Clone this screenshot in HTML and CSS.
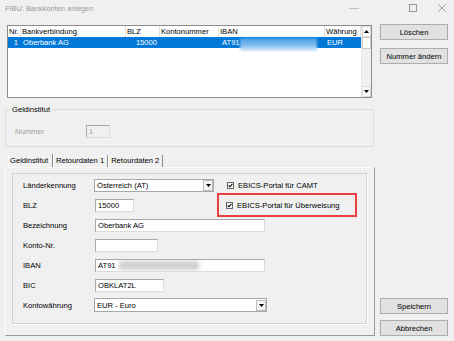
FILE: index.html
```html
<!DOCTYPE html>
<html>
<head>
    <title>FIBU: Bankkonten anlegen</title>
    <link rel="stylesheet" href="styles.css">
</head>
<body>
    <div class="titlebar">
        <span class="title">FIBU: Bankkonten anlegen</span>
        <div class="controls">
            <svg class="ctl-min" width="10" height="10" viewBox="0 0 10 10"><line x1="0" y1="5.5" x2="10" y2="5.5" stroke="#c4c4c4" stroke-width="1"/></svg>
            <svg class="ctl-max" width="8" height="8" viewBox="0 0 8 8"><rect x="0.5" y="0.5" width="7" height="7" fill="none" stroke="#9a9a9a" stroke-width="1"/></svg>
            <svg class="ctl-close" width="8" height="8" viewBox="0 0 8 8"><path d="M0.5 0.5 L7.5 7.5 M7.5 0.5 L0.5 7.5" stroke="#9a9a9a" stroke-width="1"/></svg>
        </div>
    </div>

    <div class="window">
        <div class="left">
            <!-- Bank list -->
            <div class="list">
                <div class="list-body">
                    <div class="list-head">
                        <span>Nr.</span>
                        <span>Bankverbindung</span>
                        <span>BLZ</span>
                        <span>Kontonummer</span>
                        <span>IBAN</span>
                        <span>Währung</span>
                    </div>
                    <div class="list-row selected">
                        <span class="num">1</span>
                        <span>Oberbank AG</span>
                        <span class="num">15000</span>
                        <span></span>
                        <span class="iban">AT91<span class="blur-blue"></span></span>
                        <span>EUR</span>
                    </div>
                </div>
                <div class="scrollbar">
                    <div class="sb-btn"><svg width="5" height="3" viewBox="0 0 5 3"><path d="M0 3 L2.5 0 L5 3 Z" fill="#000"/></svg></div>
                    <div class="sb-thumb"></div>
                    <div class="sb-track"></div>
                    <div class="sb-btn sb-down"><svg width="5" height="3" viewBox="0 0 5 3"><path d="M0 0 L5 0 L2.5 3 Z" fill="#000"/></svg></div>
                </div>
            </div>

            <!-- Geldinstitut group -->
            <div class="group">
                <span class="group-title">Geldinstitut</span>
                <div class="group-row">
                    <span class="group-label">Nummer</span>
                    <span class="input disabled">1</span>
                </div>
            </div>

            <!-- Tabs -->
            <div class="tabs">
                <span class="tab active">Geldinstitut</span>
                <span class="tab">Retourdaten 1</span>
                <span class="tab">Retourdaten 2</span>
            </div>
            <div class="tab-panel">
                <div class="panel-inner">
                    <div class="row">
                        <span class="label">Länderkennung</span>
                        <span class="select w-land">
                            <span class="select-text">Österreich (AT)</span>
                            <span class="drop"><svg width="5" height="3" viewBox="0 0 5 3"><path d="M0 0 L5 0 L2.5 3 Z" fill="#000"/></svg></span>
                        </span>
                        <span class="check first">
                            <svg width="7" height="7" viewBox="0 0 7 7"><rect x="0.5" y="0.5" width="6" height="6" fill="#fff" stroke="#6a6a6a"/><path d="M1.6 3.4 L2.9 4.8 L5.4 1.9" fill="none" stroke="#000" stroke-width="1.1"/></svg>
                            EBICS-Portal für CAMT
                        </span>
                    </div>
                    <div class="row">
                        <span class="label">BLZ</span>
                        <span class="input w-blz">15000</span>
                        <span class="highlight">
                            <span class="check">
                                <svg width="7" height="7" viewBox="0 0 7 7"><rect x="0.5" y="0.5" width="6" height="6" fill="#fff" stroke="#6a6a6a"/><path d="M1.6 3.4 L2.9 4.8 L5.4 1.9" fill="none" stroke="#000" stroke-width="1.1"/></svg>
                                EBICS-Portal für Überweisung
                            </span>
                        </span>
                    </div>
                    <div class="row">
                        <span class="label">Bezeichnung</span>
                        <span class="input w-wide">Oberbank AG</span>
                    </div>
                    <div class="row">
                        <span class="label">Konto-Nr.</span>
                        <span class="input w-konto"></span>
                    </div>
                    <div class="row">
                        <span class="label">IBAN</span>
                        <span class="input w-wide">AT91<span class="blur-gray"></span></span>
                    </div>
                    <div class="row">
                        <span class="label">BIC</span>
                        <span class="input w-bic">OBKLAT2L</span>
                    </div>
                    <div class="row">
                        <span class="label">Kontowährung</span>
                        <span class="select w-curr">
                            <span class="select-text">EUR - Euro</span>
                            <span class="drop"><svg width="5" height="3" viewBox="0 0 5 3"><path d="M0 0 L5 0 L2.5 3 Z" fill="#000"/></svg></span>
                        </span>
                    </div>
                </div>
            </div>
        </div>

        <div class="right">
            <button class="btn first">Löschen</button>
            <button class="btn second">Nummer ändern</button>
            <div class="spacer"></div>
            <button class="btn">Speichern</button>
            <button class="btn last">Abbrechen</button>
        </div>
    </div>
</body>
</html>
```

FILE: styles.css
```css
body {
    margin: 0;
    width: 454px;
    height: 341px;
    overflow: hidden;
    background: #f0f0f0;
    font-family: "Liberation Sans", Arial, sans-serif;
    font-size: 7.6px;
    color: #000;
}

/* title bar */
.titlebar {
    height: 16px;
    display: flex;
    align-items: center;
    padding: 0 8px 0 5px;
    color: #9a9a9a;
    font-size: 7.4px;
}
.controls {
    margin-left: auto;
    display: flex;
    align-items: center;
}
.ctl-max {
    margin-left: 50px;
}
.ctl-close {
    margin-left: 21px;
}

/* main window */
.window {
    display: flex;
    height: 325px;
    box-sizing: border-box;
    padding: 9px 6px 5px 5px;
}
.left {
    width: 370px;
    display: flex;
    flex-direction: column;
}
.right {
    width: 68px;
    margin-left: 5px;
    display: flex;
    flex-direction: column;
}
.spacer {
    flex: 1;
}

/* list view */
.list {
    margin-left: 2px;
    width: 365px;
    height: 74px;
    box-sizing: border-box;
    border: 1px solid #8c8c8c;
    background: #fff;
    display: flex;
}
.list-body {
    flex: 1;
}
.list-head,
.list-row {
    display: grid;
    grid-template-columns: 13px 105px 34px 59px 106px 36px;
    white-space: nowrap;
}
.list-head {
    height: 11px;
    line-height: 11px;
}
.list-head span {
    border-right: 1px solid #e3e3e3;
    padding-left: 1px;
}
.list-row {
    height: 11px;
    line-height: 11px;
}
.list-row span {
    padding-left: 2px;
}
.list-row .num {
    text-align: right;
    padding-right: 3px;
}
.list-row.selected {
    background: #0078d7;
    color: #fff;
}
.list-row .iban {
    padding-left: 3px;
}
.list-row span.blur-blue {
    display: inline-block;
    vertical-align: top;
    width: 77px;
    height: 13px;
    padding: 0;
    margin-top: 1px;
    background: linear-gradient(to bottom, #4a9fe6 0%, #78b9ef 50%, #d9ebfa 100%);
    filter: blur(1.2px);
}

.scrollbar {
    width: 10px;
    background: #f0f0f0;
    border-left: 1px solid #e6e6e6;
    display: flex;
    flex-direction: column;
}
.sb-btn {
    height: 11px;
    display: flex;
    align-items: center;
    justify-content: center;
    border: 1px solid #dcdcdc;
    box-sizing: border-box;
    background: #fafafa;
}
.sb-thumb {
    height: 10px;
    border: 1px solid #c8c8c8;
    background: #fff;
}
.sb-track {
    flex: 1;
}

/* group box */
.group {
    position: relative;
    margin-top: 11px;
    width: 369px;
    height: 38px;
    box-sizing: border-box;
    border: 1px solid #dcdcdc;
    padding: 15px 0 0 9px;
}
.group-title {
    position: absolute;
    top: -5px;
    left: 5px;
    padding: 0 1px;
    line-height: 9px;
    background: #f0f0f0;
}
.group-row {
    display: flex;
    align-items: center;
}
.group-label {
    width: 71px;
    color: #a0a0a0;
}

/* inputs */
.input {
    display: inline-block;
    height: 13px;
    line-height: 11px;
    box-sizing: border-box;
    padding-left: 2px;
    background: #fff;
    border: 1px solid #dcdcdc;
    border-top-color: #a8a8a8;
    border-left-color: #a8a8a8;
    white-space: nowrap;
    overflow: hidden;
}
.input.disabled {
    width: 24px;
    background: #f0f0f0;
    color: #a0a0a0;
}
.w-blz { width: 39px; }
.w-wide { width: 170px; }
.w-konto { width: 63px; }
.w-bic { width: 69px; }

.blur-gray {
    display: inline-block;
    vertical-align: top;
    width: 80px;
    height: 9px;
    margin: 1px 0 0 3px;
    background: #cfcfcf;
    filter: blur(2px);
}

.select {
    display: flex;
    align-items: center;
    height: 13px;
    box-sizing: border-box;
    margin-left: -1px;
    background: #fff;
    border: 1px solid #a8a8a8;
    padding-left: 2px;
}
.select-text {
    flex: 1;
}
.drop {
    width: 10px;
    height: 11px;
    display: flex;
    align-items: center;
    justify-content: center;
    box-sizing: border-box;
    border: 1px solid #bcbcbc;
    background: #f4f4f4;
}
.w-land { width: 120px; }
.w-curr { width: 173px; height: 14px; }

/* tabs */
.tabs {
    margin-top: 6px;
    height: 14px;
    display: flex;
    align-items: flex-end;
    padding-left: 3px;
}
.tab {
    line-height: 12px;
    padding: 0 3px 0 2px;
    border-left: 1px solid #fff;
    border-right: 1px solid #8a8a8a;
}
.tab.active {
    line-height: 13px;
    padding-left: 1px;
    padding-right: 4px;
}
.tab-panel {
    height: 170px;
    box-sizing: border-box;
    border: 1px solid;
    border-color: #fcfcfc #9a9a9a #9a9a9a #fcfcfc;
    padding: 5px 7px 0 6px;
}
.panel-inner {
    height: 151px;
    box-sizing: border-box;
    border: 1px solid #d3d3d3;
    box-shadow: 1px 1px 0 #fff;
    padding: 1px 0 0 10px;
}

/* form rows */
.row {
    display: flex;
    align-items: center;
    height: 20px;
    white-space: nowrap;
}
.label {
    width: 72px;
}
.check {
    display: flex;
    align-items: center;
    gap: 4px;
}
.check.first {
    margin-left: 13px;
}
.highlight {
    display: flex;
    align-items: center;
    width: 140px;
    height: 24px;
    box-sizing: border-box;
    margin-left: 83px;
    padding-left: 7px;
    border: 2px solid #e8403f;
}

/* buttons */
.btn {
    height: 16px;
    padding: 0;
    font: inherit;
    color: #000;
    background: #e1e1e1;
    border: 1px solid #adadad;
}
.btn.first {
    margin-top: -1px;
}
.btn.second {
    margin-top: 8px;
}
.btn.last {
    margin-top: 6px;
}
```
